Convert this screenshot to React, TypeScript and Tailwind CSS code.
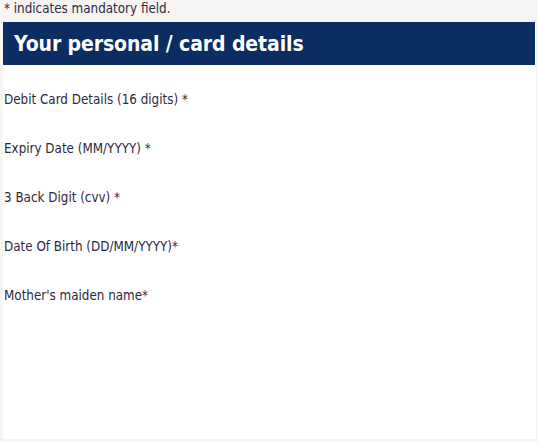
const fields = [
  "Debit Card Details (16 digits) *",
  "Expiry Date (MM/YYYY) *",
  "3 Back Digit (cvv) *",
  "Date Of Birth (DD/MM/YYYY)*",
  "Mother's maiden name*",
];

export default function App() {
  return (
    <div
      className="w-[538px] h-[442px] bg-[#f6f5f4] text-[#2e2a40] overflow-hidden"
      style={{ fontFamily: '"DejaVu Sans Condensed", "DejaVu Sans", sans-serif' }}
    >
      <p className="pl-[4px] pt-[2px] h-[22px] text-[13.3px] leading-[14px]">* indicates mandatory field.</p>
      <div className="ml-[3px] mr-[2px] bg-white h-[417px]">
        <div className="h-[43px] mr-[1px] bg-[#0b2d62] flex items-center pl-[11px] pt-[2px]">
          <h1 className="text-white font-bold text-[21px] leading-none tracking-[-0.1px]">Your personal / card details</h1>
        </div>
        <div className="pt-[27px] flex flex-col">
          {fields.map((f) => (
            <div key={f} className="h-[49px] pl-[1px]">
              <label className="block text-[13.3px] leading-[16px]">{f}</label>
            </div>
          ))}
        </div>
      </div>
    </div>
  );
}
